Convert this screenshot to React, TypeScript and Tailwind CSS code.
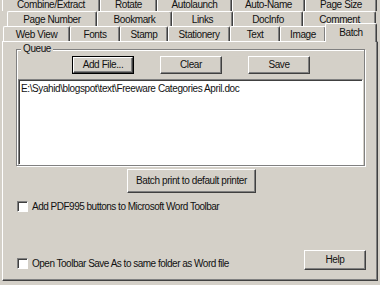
const row1 = [
  { label: "Combine/Extract", w: 98 },
  { label: "Rotate", w: 57 },
  { label: "Autolaunch", w: 75 },
  { label: "Auto-Name", w: 73 },
  { label: "Page Size", w: 72 },
];
const row2 = [
  { label: "Page Number", w: 90 },
  { label: "Bookmark", w: 75 },
  { label: "Links", w: 61 },
  { label: "DocInfo", w: 70 },
  { label: "Comment", w: 73 },
];
const row3 = [
  { label: "Web View", w: 67 },
  { label: "Fonts", w: 50 },
  { label: "Stamp", w: 48 },
  { label: "Stationery", w: 62 },
  { label: "Text", w: 50 },
  { label: "Image", w: 46 },
];

const tabCls =
  "h-full shrink-0 flex items-center justify-center rounded-t-[2px] border-t border-l border-r border-t-white border-l-white border-r-[#404040] shadow-[inset_-1px_0_#808080] bg-[#d4d0c8]";

const btnCls =
  "flex items-center justify-center border border-t-white border-l-white border-r-[#404040] border-b-[#404040] shadow-[inset_-1px_-1px_#808080] bg-[#d4d0c8]";

function Checkbox({ label }: { label: string }) {
  return (
    <div className="flex items-center gap-[4px]">
      <div className="w-[11px] h-[11px] bg-white border border-t-[#808080] border-l-[#808080] border-r-white border-b-white shadow-[inset_1px_1px_#404040]" />
      <span className="tracking-[-0.5px]">{label}</span>
    </div>
  );
}

export default function App() {
  return (
    <div className="w-[380px] h-[285px] overflow-hidden bg-[#d4d0c8] text-[#111] text-[10px] tracking-[-0.4px] font-['Liberation_Sans',Arial,sans-serif] leading-none">
      {/* tab rows */}
      <div className="flex h-[16px] -mt-[5px] pl-[2px]">
        {row1.map((t) => (
          <div key={t.label} className={tabCls} style={{ width: t.w }}>
            <span className="pt-[2px]">{t.label}</span>
          </div>
        ))}
      </div>
      <div className="flex h-[15px] pl-[7px]">
        {row2.map((t) => (
          <div key={t.label} className={tabCls} style={{ width: t.w }}>
            <span className="pt-[2px]">{t.label}</span>
          </div>
        ))}
      </div>
      <div className="flex h-[15px] pl-[3px] items-end">
        {row3.map((t) => (
          <div key={t.label} className={tabCls} style={{ width: t.w }}>
            <span className="pt-[2px]">{t.label}</span>
          </div>
        ))}
        <div className="relative z-10 shrink-0 w-[52px] h-[19px] -mb-[1px] ml-[-1px] flex items-start justify-center pt-[4px] rounded-t-[2px] border-t border-l border-r border-t-white border-l-white border-r-[#404040] shadow-[inset_-1px_0_#808080] bg-[#d4d0c8]">
          Batch
        </div>
      </div>

      {/* panel */}
      <div className="ml-[2px] w-[376px] h-[240px] flex flex-col border border-t-white border-l-white border-r-[#404040] border-b-[#404040] shadow-[inset_-1px_-1px_#808080]">
        <div className="relative ml-[13px] mt-[7px] w-[349px] border border-[#808080] shadow-[inset_1px_1px_white,1px_1px_white]">
          <span className="absolute -top-[6px] left-[4px] px-[2px] bg-[#d4d0c8]">Queue</span>
          <div className="flex gap-[26px] ml-[55px] mt-[6px]">
            <div className="border border-black">
              <div className={btnCls + " w-[60px] h-[16px]"}>Add File...</div>
            </div>
            <div className={btnCls + " w-[62px] h-[18px]"}>Clear</div>
            <div className={btnCls + " w-[62px] h-[18px]"}>Save</div>
          </div>
          <div className="ml-[1px] mt-[5px] w-[345px] h-[86px] bg-white border border-t-[#808080] border-l-[#808080] border-r-white border-b-white shadow-[inset_1px_1px_#404040] px-[2px] pt-[4px]">
            E:\Syahid\blogspot\text\Freeware Categories April.doc
          </div>
        </div>

        <div className={btnCls + " ml-[124px] mt-[3px] w-[129px] h-[24px]"}>
          Batch print to default printer
        </div>

        <div className="ml-[14px] mt-[8px]">
          <Checkbox label="Add PDF995 buttons to Microsoft Word Toolbar" />
        </div>

        <div className="mt-auto mb-[10px] flex items-start justify-between ml-[14px] mr-[11px]">
          <div className="mt-[8px]">
            <Checkbox label="Open Toolbar Save As to same folder as Word file" />
          </div>
          <div className={btnCls + " w-[62px] h-[20px]"}>Help</div>
        </div>
      </div>
    </div>
  );
}
